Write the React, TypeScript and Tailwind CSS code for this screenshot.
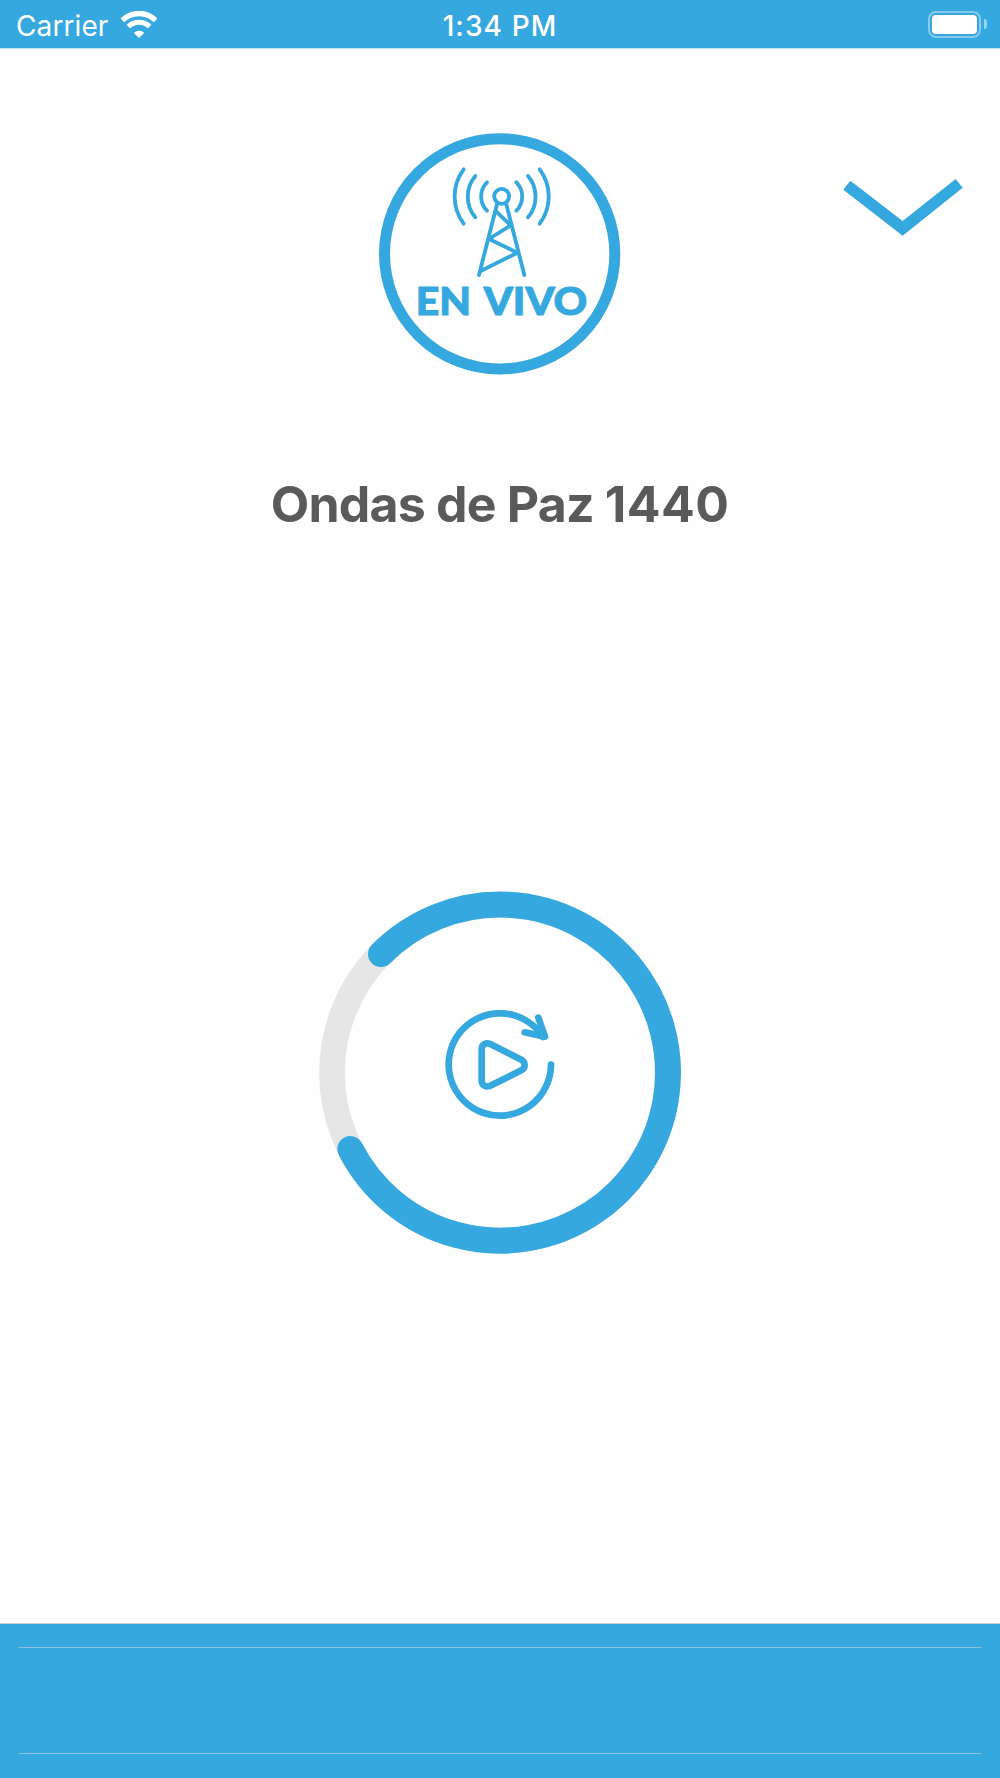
import React, { useState } from 'react';

const WifiIcon = () => (
  <svg viewBox="0 0 108 81" className="h-[27px] w-9" fill="none" stroke="white" aria-hidden>
    <path d="M4 28 A71 71 0 0 1 104 28" strokeWidth="16" />
    <path d="M22 47 A46 46 0 0 1 86 47" strokeWidth="15" />
    <path d="M54 81 L38 65 A25 25 0 0 1 70 65 Z" fill="white" stroke="none" />
  </svg>
);

const BatteryIcon = () => (
  <div className="flex items-center gap-[3px]">
    <div className="h-[27px] w-[53px] rounded-[8px] border-2 border-white/40 p-[2px]">
      <div className="h-full w-full rounded-[4px] bg-white" />
    </div>
    <div className="h-[10px] w-[3px] rounded-r-full bg-white/50" />
  </div>
);

const StatusBar = () => (
  <header className="grid h-[49px] grid-cols-3 items-center border-b border-[#bfe2f5] bg-[#36a8e0] pl-4 pr-[13px] text-white">
    <div className="flex items-center gap-3">
      <span className="w-[92.5px] whitespace-nowrap pt-[3px] text-[28px] leading-none tracking-[0.1px]">Carrier</span>
      <WifiIcon />
    </div>
    <span className="-ml-[3px] whitespace-nowrap pt-[3px] text-center text-[28px] font-medium leading-none tracking-[1.1px]">
      1:34 PM
    </span>
    <div className="flex justify-end">
      <BatteryIcon />
    </div>
  </header>
);

const LiveLogo = () => (
  <svg viewBox="0 0 780 780" className="size-[260px]" fill="none" stroke="#36a8e0" role="img">
    <circle cx="389" cy="401.5" r="345.5" strokeWidth="33" />
    <g strokeWidth="11.5" strokeLinecap="round" strokeLinejoin="round">
      <circle cx="395" cy="229" r="22.5" />
      <path d="M281 148 A136 136 0 0 0 281 311" />
      <path d="M316 168 A96 96 0 0 0 316 292" />
      <path d="M351 187 A60 60 0 0 0 351 272" />
      <path d="M439 187 A60 60 0 0 1 439 272" />
      <path d="M474 168 A96 96 0 0 1 474 292" />
      <path d="M509 148 A136 136 0 0 1 509 311" />
      <path d="M381 253 L327 465 M409 253 L463 465" />
      <path d="M379 275 L422 316 L357 357 L442 398 L332 453" />
    </g>
    <g fill="#36a8e0" strokeWidth="3" className="font-['Lato',sans-serif] text-[116px] font-black">
      <text x="137" y="584" textLength="166" lengthAdjust="spacingAndGlyphs">EN</text>
      <text x="341" y="584" textLength="311" lengthAdjust="spacingAndGlyphs">VIVO</text>
    </g>
  </svg>
);

const ChevronDown = () => (
  <svg viewBox="0 0 480 270" className="h-[90px] w-[160px]" fill="#36a8e0" aria-hidden>
    <path d="M70 89 L91 62 L248 183 L407 57 L428 83 L248 227 Z" />
  </svg>
);

const PlayerRing = () => (
  <svg viewBox="0 0 1200 1200" className="size-[400px]" fill="none" stroke="#36a8e0" aria-hidden>
    <circle cx="600" cy="608" r="504" stroke="#e6e6e6" strokeWidth="77" />
    <path d="M243 252 A504 504 0 1 1 151 837" strokeWidth="78" strokeLinecap="round" />
    <g strokeWidth="20" strokeLinecap="round" strokeLinejoin="round">
      <path d="M753 584 A153.5 153.5 0 1 1 729 501" />
      <path d="M715 443 L735 500 L674 487" />
      <path d="M545 538 C545 523 558 516 571 522 L664 569 Q674 575 674 585 Q674 596 664 601 L571 647 C558 653 545 646 545 632 Z" />
    </g>
  </svg>
);

const App = () => {
  const [playing, setPlaying] = useState(false);

  return (
    <div className="flex h-[1778px] w-[1000px] flex-col overflow-hidden bg-[#fefefe] font-['Inter',sans-serif]">
      <StatusBar />

      <main className="flex flex-1 flex-col items-center">
        <div className="mt-[71px] grid w-full grid-cols-[370px_260px_1fr]">
          <span />
          <LiveLogo />
          <button className="ml-[190px] mt-10 self-start" aria-label="Cerrar">
            <ChevronDown />
          </button>
        </div>

        <h1 className="mt-[94px] whitespace-nowrap text-[50px] font-bold leading-[60px] tracking-[-0.8px] text-[#5a5a5a]">
          Ondas de Paz <span className="tracking-[0.4px]">1440</span>
        </h1>

        <button
          className="mt-[336px]"
          onClick={() => setPlaying(!playing)}
          aria-pressed={playing}
          aria-label="Reproducir"
        >
          <PlayerRing />
        </button>
      </main>

      <footer className="h-[155px] border-t border-[#c5cfd4] bg-[#36a8e0] px-[19px] pt-[23px]">
        <div className="h-[107px] border-b border-t border-[#90c2dc]" />
      </footer>
    </div>
  );
};

export default App;
